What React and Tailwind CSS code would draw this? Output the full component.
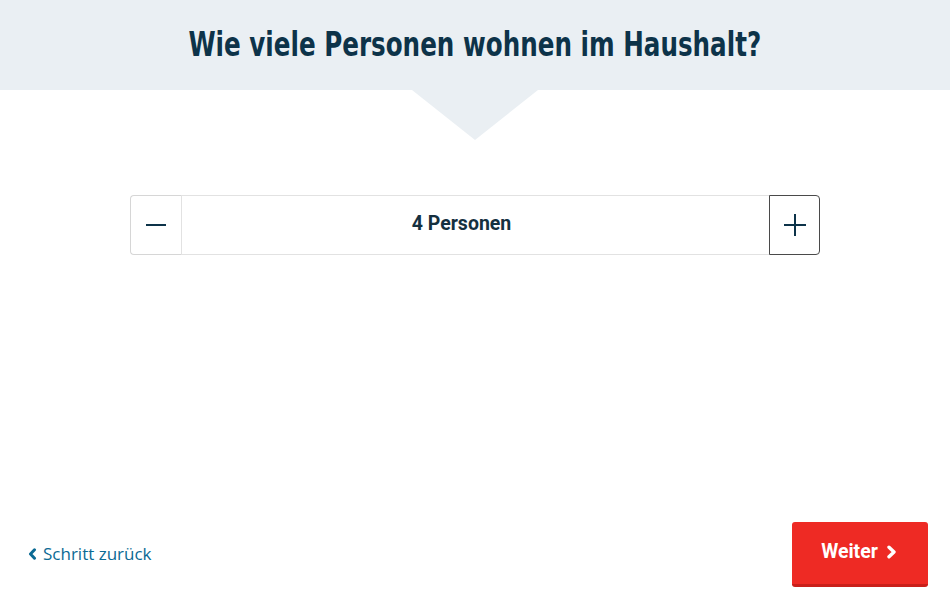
import { useState } from 'react';

function ChevronLeft() {
    return (
        <svg width="9" height="12" viewBox="0 0 9 12" aria-hidden="true">
            <path d="M6.5 1.8 2.5 6l4 4.2" fill="none" stroke="currentColor" strokeWidth="3" strokeLinecap="round" strokeLinejoin="round" />
        </svg>
    );
}

function ChevronRight() {
    return (
        <svg width="11" height="14" viewBox="0 0 11 14" aria-hidden="true">
            <path d="M3 2.2 8 7l-5 4.8" fill="none" stroke="currentColor" strokeWidth="3.4" strokeLinecap="round" strokeLinejoin="round" />
        </svg>
    );
}

export default function App() {
    const [count, setCount] = useState(4);

    return (
        <div className="flex h-[615px] w-[950px] flex-col bg-white" style={{ fontFamily: 'Roboto, "Liberation Sans", sans-serif' }}>
            <div className="relative flex h-[90px] shrink-0 items-center justify-center bg-[#eaeff3]">
                <h1 className="shrink-0 scale-x-[0.805] whitespace-nowrap pb-[2px] text-[34px] font-bold text-[#0d3349]" style={{ fontFamily: '"DejaVu Sans Condensed", sans-serif' }}>
                    Wie viele Personen wohnen im Haushalt?
                </h1>
                <div className="absolute left-[412px] top-[90px] h-0 w-0 border-x-[63px] border-t-[50px] border-x-transparent border-t-[#eaeff3]" />
            </div>

            <div className="flex justify-center pt-[105px]">
                <div className="flex h-[60px] w-[690px]">
                    <button
                        type="button"
                        onClick={() => setCount(c => Math.max(1, c - 1))}
                        className="flex w-[51px] items-center justify-center rounded-l-[4px] border border-r-0 border-[#d6d6d6] bg-white text-[#0d3349]"
                    >
                        <svg width="20" height="20" viewBox="0 0 20 20"><path d="M0 10h20" stroke="currentColor" strokeWidth="2" /></svg>
                    </button>
                    <div className="flex flex-1 items-center justify-center border border-[#e2e2e2] pb-[2px] pr-[28px] text-[19.5px] font-bold text-[#15303f]">
                        {count} Personen
                    </div>
                    <button
                        type="button"
                        onClick={() => setCount(c => c + 1)}
                        className="-ml-px flex w-[51px] items-center justify-center rounded-r-[4px] border border-[#4a4a4a] bg-white text-[#0d3349]"
                    >
                        <svg width="22" height="22" viewBox="0 0 22 22"><path d="M0 11h22M11 0v22" stroke="currentColor" strokeWidth="2" /></svg>
                    </button>
                </div>
            </div>

            <div className="mt-auto flex items-center justify-between pb-[28px] pl-[28px] pr-[22px]">
                <a href="#" className="flex items-center gap-[6px] pb-[2px] text-[17px] font-medium text-[#0b6a94]" style={{ fontFamily: '"Open Sans", sans-serif' }}>
                    <ChevronLeft />
                    Schritt zurück
                </a>
                <button type="button" className="flex h-[65px] w-[136px] items-center justify-center gap-[8px] rounded-[3px] border-b-[3px] border-[#c91f1a] bg-[#ee2a24] pb-[3px] pr-[2px] text-[19.5px] font-bold text-white">
                    Weiter
                    <ChevronRight />
                </button>
            </div>
        </div>
    );
}
